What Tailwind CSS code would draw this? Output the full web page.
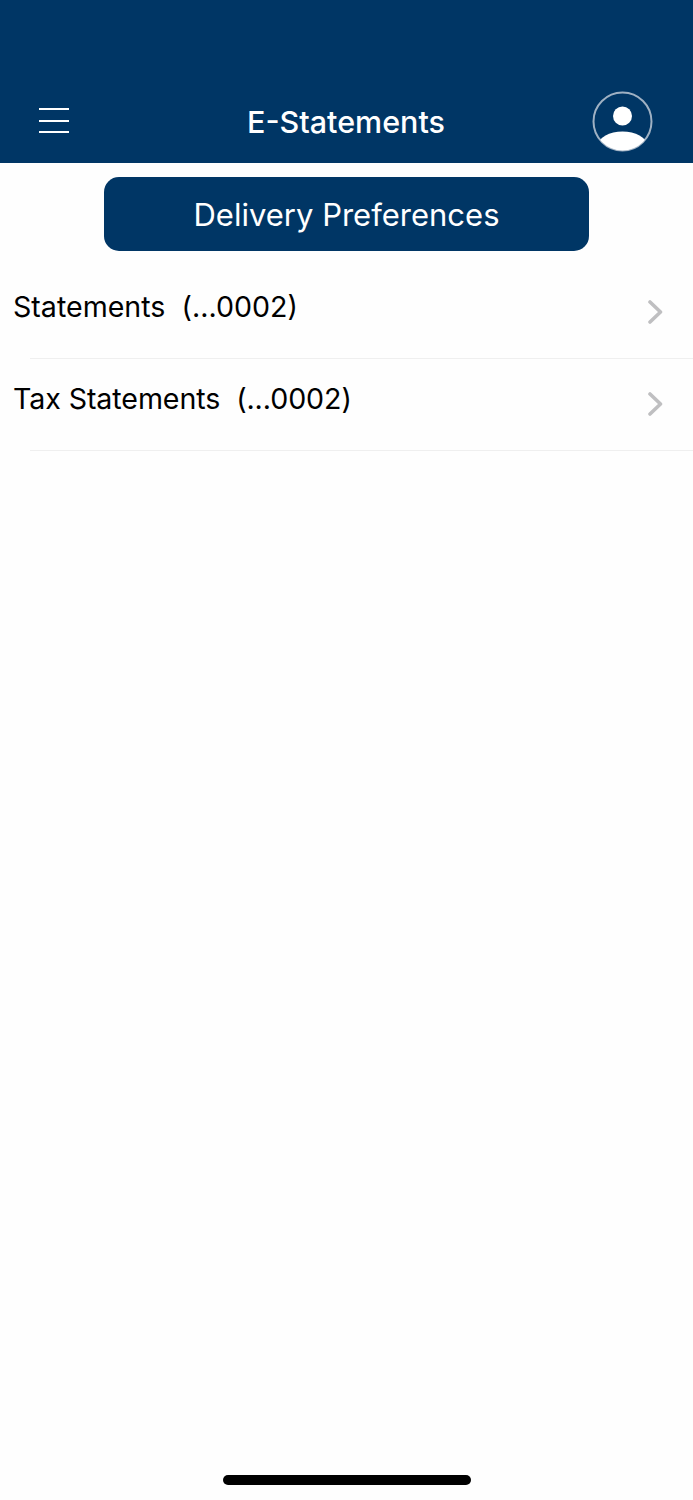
<!DOCTYPE html>
<html lang="en">
<head>
    <meta charset="UTF-8">
    <meta name="viewport" content="width=device-width, initial-scale=1.0">
    <title>E-Statements</title>
    <script src="https://cdn.jsdelivr.net/npm/@tailwindcss/browser@4"></script>
</head>
<body class="bg-[#fefefe] font-['Inter',sans-serif]">
    <div class="w-[693px] h-[1500px] flex flex-col">
        <header class="h-[163px] bg-[#003665] grid grid-cols-[1fr_auto_1fr] items-end pl-[39px] pr-[40px] pb-[11px] shrink-0">
            <div class="w-[30px] h-[25px] mb-[19px] flex flex-col justify-between">
                <div class="h-[2px] bg-white"></div>
                <div class="h-[2px] bg-white"></div>
                <div class="h-[2px] bg-white"></div>
            </div>
            <h1 class="text-white text-[30.5px] leading-[36px] font-medium mb-[12px]">E-Statements</h1>
            <svg class="justify-self-end" width="61" height="61" viewBox="0 0 61 61">
                <defs><clipPath id="avatar"><circle cx="30.5" cy="30.5" r="29"/></clipPath></defs>
                <circle cx="30.5" cy="30.5" r="29" fill="none" stroke="#9fb1c3" stroke-width="2"/>
                <circle cx="30.5" cy="25" r="9.5" fill="#fff"/>
                <ellipse cx="30.5" cy="54" rx="24" ry="13.5" fill="#fff" clip-path="url(#avatar)"/>
            </svg>
        </header>
        <div class="flex justify-center pt-[14px]">
            <button class="w-[485px] h-[74px] pt-[2px] rounded-[15px] bg-[#003665] text-white text-[31px]">Delivery Preferences</button>
        </div>
        <ul class="mt-[16px]">
            <li class="h-[92px] relative flex justify-between pl-[13px] pr-[30px]">
                <span class="text-[28.6px] leading-[36px] text-black mt-[22px] whitespace-pre">Statements  (...0002)</span>
                <svg class="mt-[33px]" width="15" height="24" viewBox="0 0 15 24" fill="none"><path d="M2 2l10.5 10L2 22" stroke="#bfbfc1" stroke-width="3.6" stroke-linecap="round" stroke-linejoin="round"/></svg>
                <div class="absolute left-[30px] right-0 bottom-0 h-px bg-[#efefef]"></div>
            </li>
            <li class="h-[92px] relative flex justify-between pl-[13px] pr-[30px]">
                <span class="text-[28.6px] leading-[36px] tracking-[-0.09px] text-black mt-[22px] whitespace-pre">Tax Statements  (...0002)</span>
                <svg class="mt-[33px]" width="15" height="24" viewBox="0 0 15 24" fill="none"><path d="M2 2l10.5 10L2 22" stroke="#bfbfc1" stroke-width="3.6" stroke-linecap="round" stroke-linejoin="round"/></svg>
                <div class="absolute left-[30px] right-0 bottom-0 h-px bg-[#efefef]"></div>
            </li>
        </ul>
        <div class="mt-auto mb-[15px] mx-auto w-[248px] h-[10px] rounded-full bg-black"></div>
    </div>
</body>
</html>
